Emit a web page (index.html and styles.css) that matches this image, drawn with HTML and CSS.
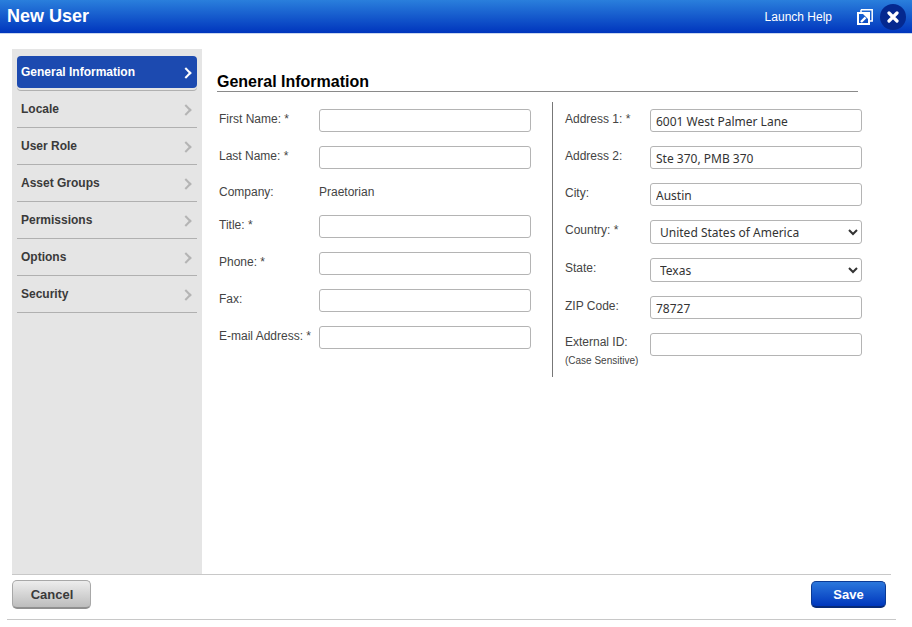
FILE: index.html
```html
<!DOCTYPE html>
<html lang="en">
<head>
    <meta charset="UTF-8">
    <meta name="viewport" content="width=device-width, initial-scale=1.0">
    <title>New User</title>
    <link rel="stylesheet" href="styles.css">
</head>
<body>
    <header class="title-bar">
        <h1>New User</h1>
        <a class="help-link">Launch Help</a>
        <svg class="popout-icon" width="16" height="16" viewBox="0 0 16 16">
            <path d="M4 .8h11.200v11.200h-3M4 .8v3" fill="none" stroke="#fff" stroke-width="1.500"/>
            <rect x="1" y="4" width="11" height="11" fill="none" stroke="#fff" stroke-width="2"/>
            <path d="M4 13l4.500-4.500" fill="none" stroke="#fff" stroke-width="2.400"/>
            <path d="M5.500 4.500h6v6z" fill="#fff"/>
        </svg>
        <span class="close-btn">
            <svg width="12" height="12" viewBox="0 0 12 12">
                <path d="M2 2l8 8M10 2l-8 8" stroke="#fff" stroke-width="3.200" stroke-linecap="round"/>
            </svg>
        </span>
    </header>

    <div class="main">
        <nav class="side-nav">
            <a class="nav-item active">General Information<span class="chevron"></span></a>
            <a class="nav-item">Locale<span class="chevron"></span></a>
            <a class="nav-item">User Role<span class="chevron"></span></a>
            <a class="nav-item">Asset Groups<span class="chevron"></span></a>
            <a class="nav-item">Permissions<span class="chevron"></span></a>
            <a class="nav-item">Options<span class="chevron"></span></a>
            <a class="nav-item">Security<span class="chevron"></span></a>
        </nav>

        <section class="content">
            <h2>General Information</h2>
            <div class="columns">
                <div class="col col-left">
                    <div class="row"><label>First Name: *</label><input type="text"></div>
                    <div class="row"><label>Last Name: *</label><input type="text"></div>
                    <div class="row row-static"><label>Company:</label><span class="value">Praetorian</span></div>
                    <div class="row"><label>Title: *</label><input type="text"></div>
                    <div class="row"><label>Phone: *</label><input type="text"></div>
                    <div class="row"><label>Fax:</label><input type="text"></div>
                    <div class="row"><label>E-mail Address: *</label><input type="text"></div>
                </div>
                <div class="col col-right">
                    <div class="row"><label>Address 1: *</label><input type="text" value="6001 West Palmer Lane"></div>
                    <div class="row"><label>Address 2:</label><input type="text" value="Ste 370, PMB 370"></div>
                    <div class="row"><label>City:</label><input type="text" value="Austin"></div>
                    <div class="row row-select"><label>Country: *</label><select><option>United States of America</option></select></div>
                    <div class="row row-select"><label>State:</label><select><option>Texas</option></select></div>
                    <div class="row"><label>ZIP Code:</label><input type="text" value="78727"></div>
                    <div class="row row-external"><label>External ID:<small>(Case Sensitive)</small></label><input type="text"></div>
                </div>
            </div>
        </section>
    </div>

    <footer class="actions">
        <button class="btn btn-cancel">Cancel</button>
        <button class="btn btn-save">Save</button>
    </footer>
</body>
</html>
```

FILE: styles.css
```css
html, body {
    height: 100%;
}
body {
    margin: 0;
    font-family: "Liberation Sans", Arial, sans-serif;
    font-size: 12px;
    color: #333;
    background: #fff;
    display: flex;
    flex-direction: column;
    overflow: hidden;
}

/* title bar */
.title-bar {
    height: 33px;
    flex: none;
    display: flex;
    align-items: center;
    padding: 0 6px 0 7px;
    background: linear-gradient(#2a7fdc 0%, #0035bd 100%);
    border-bottom: 1px solid #c9d6ee;
    color: #fff;
}
.title-bar h1 {
    margin: 0;
    font-size: 18px;
    font-weight: bold;
    flex: 1;
}
.help-link {
    font-size: 12px;
    margin-right: 25px;
}
.popout-icon {
    margin-right: 7px;
}
.close-btn {
    width: 26px;
    height: 26px;
    border-radius: 50%;
    background: #04288f;
    display: flex;
    align-items: center;
    justify-content: center;
}

/* main area */
.main {
    display: flex;
    height: 525px;
    flex: none;
    margin: 15px 21px 0 12px;
    border-bottom: 1px solid #c8c8c8;
}
.side-nav {
    width: 180px;
    flex: none;
    background: #e5e5e5;
    padding: 7px 5px 0;
}
.nav-item {
    display: flex;
    align-items: center;
    justify-content: space-between;
    height: 37px;
    box-sizing: border-box;
    padding: 0 5px 0 4px;
    border-bottom: 1px solid #b0b0b0;
    font-weight: bold;
    color: #3a3a3a;
}
.nav-item.active {
    height: 32px;
    margin-bottom: 3px;
    color: #fff;
    background: #1c4ab0;
    border-radius: 4px;
    border-bottom: none;
    box-shadow: 0 2px 0 #e5e5e5, 0 3px 0 #b0b0b0;
}
.chevron {
    width: 6px;
    height: 6px;
    margin: 1px 2px 0 0;
    border-top: 2.500px solid #b4b4b4;
    border-right: 2.500px solid #b4b4b4;
    transform: rotate(45deg);
}
.active .chevron {
    border-color: #fff;
}

/* form */
.content {
    flex: 1;
    padding: 23px 0 0 15px;
}
.content h2 {
    margin: 0 33px 0 0;
    height: 19px;
    font-size: 16px;
    line-height: 19px;
    color: #000;
    border-bottom: 1px solid #8a8a8a;
}
.columns {
    display: flex;
    margin-top: 10px;
}
.col {
    box-sizing: border-box;
    height: 275px;
    padding-top: 7px;
}
.col-left {
    width: 336px;
    padding-left: 2px;
    border-right: 1px solid #777;
}
.col-right {
    flex: 1;
    padding-left: 12px;
}
.row {
    display: flex;
    height: 37px;
    color: #444;
}
.row label {
    width: 100px;
    flex: none;
    padding-top: 3px;
}
.col-right .row label {
    width: 85px;
}
.row small {
    display: block;
    margin-top: 6px;
    font-size: 10px;
}
.row input, .row select {
    box-sizing: border-box;
    width: 212px;
    height: 23px;
    margin: 0;
    padding: 1px 5px 0;
    background: #fff;
    border: 1px solid #b4b4b4;
    border-radius: 3px;
    font-family: "Noto Sans", sans-serif;
    font-size: 12px;
    color: #333;
    outline: none;
}
.row select {
    height: 24px;
    padding-left: 5px;
}
.row-static {
    height: 32px;
}
.row-static label, .row-static .value {
    padding-top: 2px;
}
.row-select {
    height: 38px;
}
.row-external label {
    padding-top: 2px;
}

/* footer */
.actions {
    height: 45px;
    flex: none;
    box-sizing: border-box;
    margin: 0 16px 0 7px;
    padding: 5px 10px 0 5px;
    display: flex;
    justify-content: space-between;
    align-items: flex-start;
    border-bottom: 1px solid #c8c8c8;
}
.btn {
    height: 29px;
    border-radius: 5px;
    font-family: "Liberation Sans", Arial, sans-serif;
    font-size: 13px;
    font-weight: bold;
    padding: 0;
}
.btn-cancel {
    width: 79px;
    padding-left: 1px;
    color: #3a3a3a;
    background: linear-gradient(#ededed, #bdbdbd);
    border: 1px solid #a8a8a8;
    border-bottom: 2px solid #909090;
}
.btn-save {
    width: 75px;
    margin-top: 1px;
    height: 27px;
    color: #fff;
    background: linear-gradient(#2b77dc, #0037bd);
    border: 1px solid #0b3a94;
    border-bottom: 2px solid #072a78;
}
```
